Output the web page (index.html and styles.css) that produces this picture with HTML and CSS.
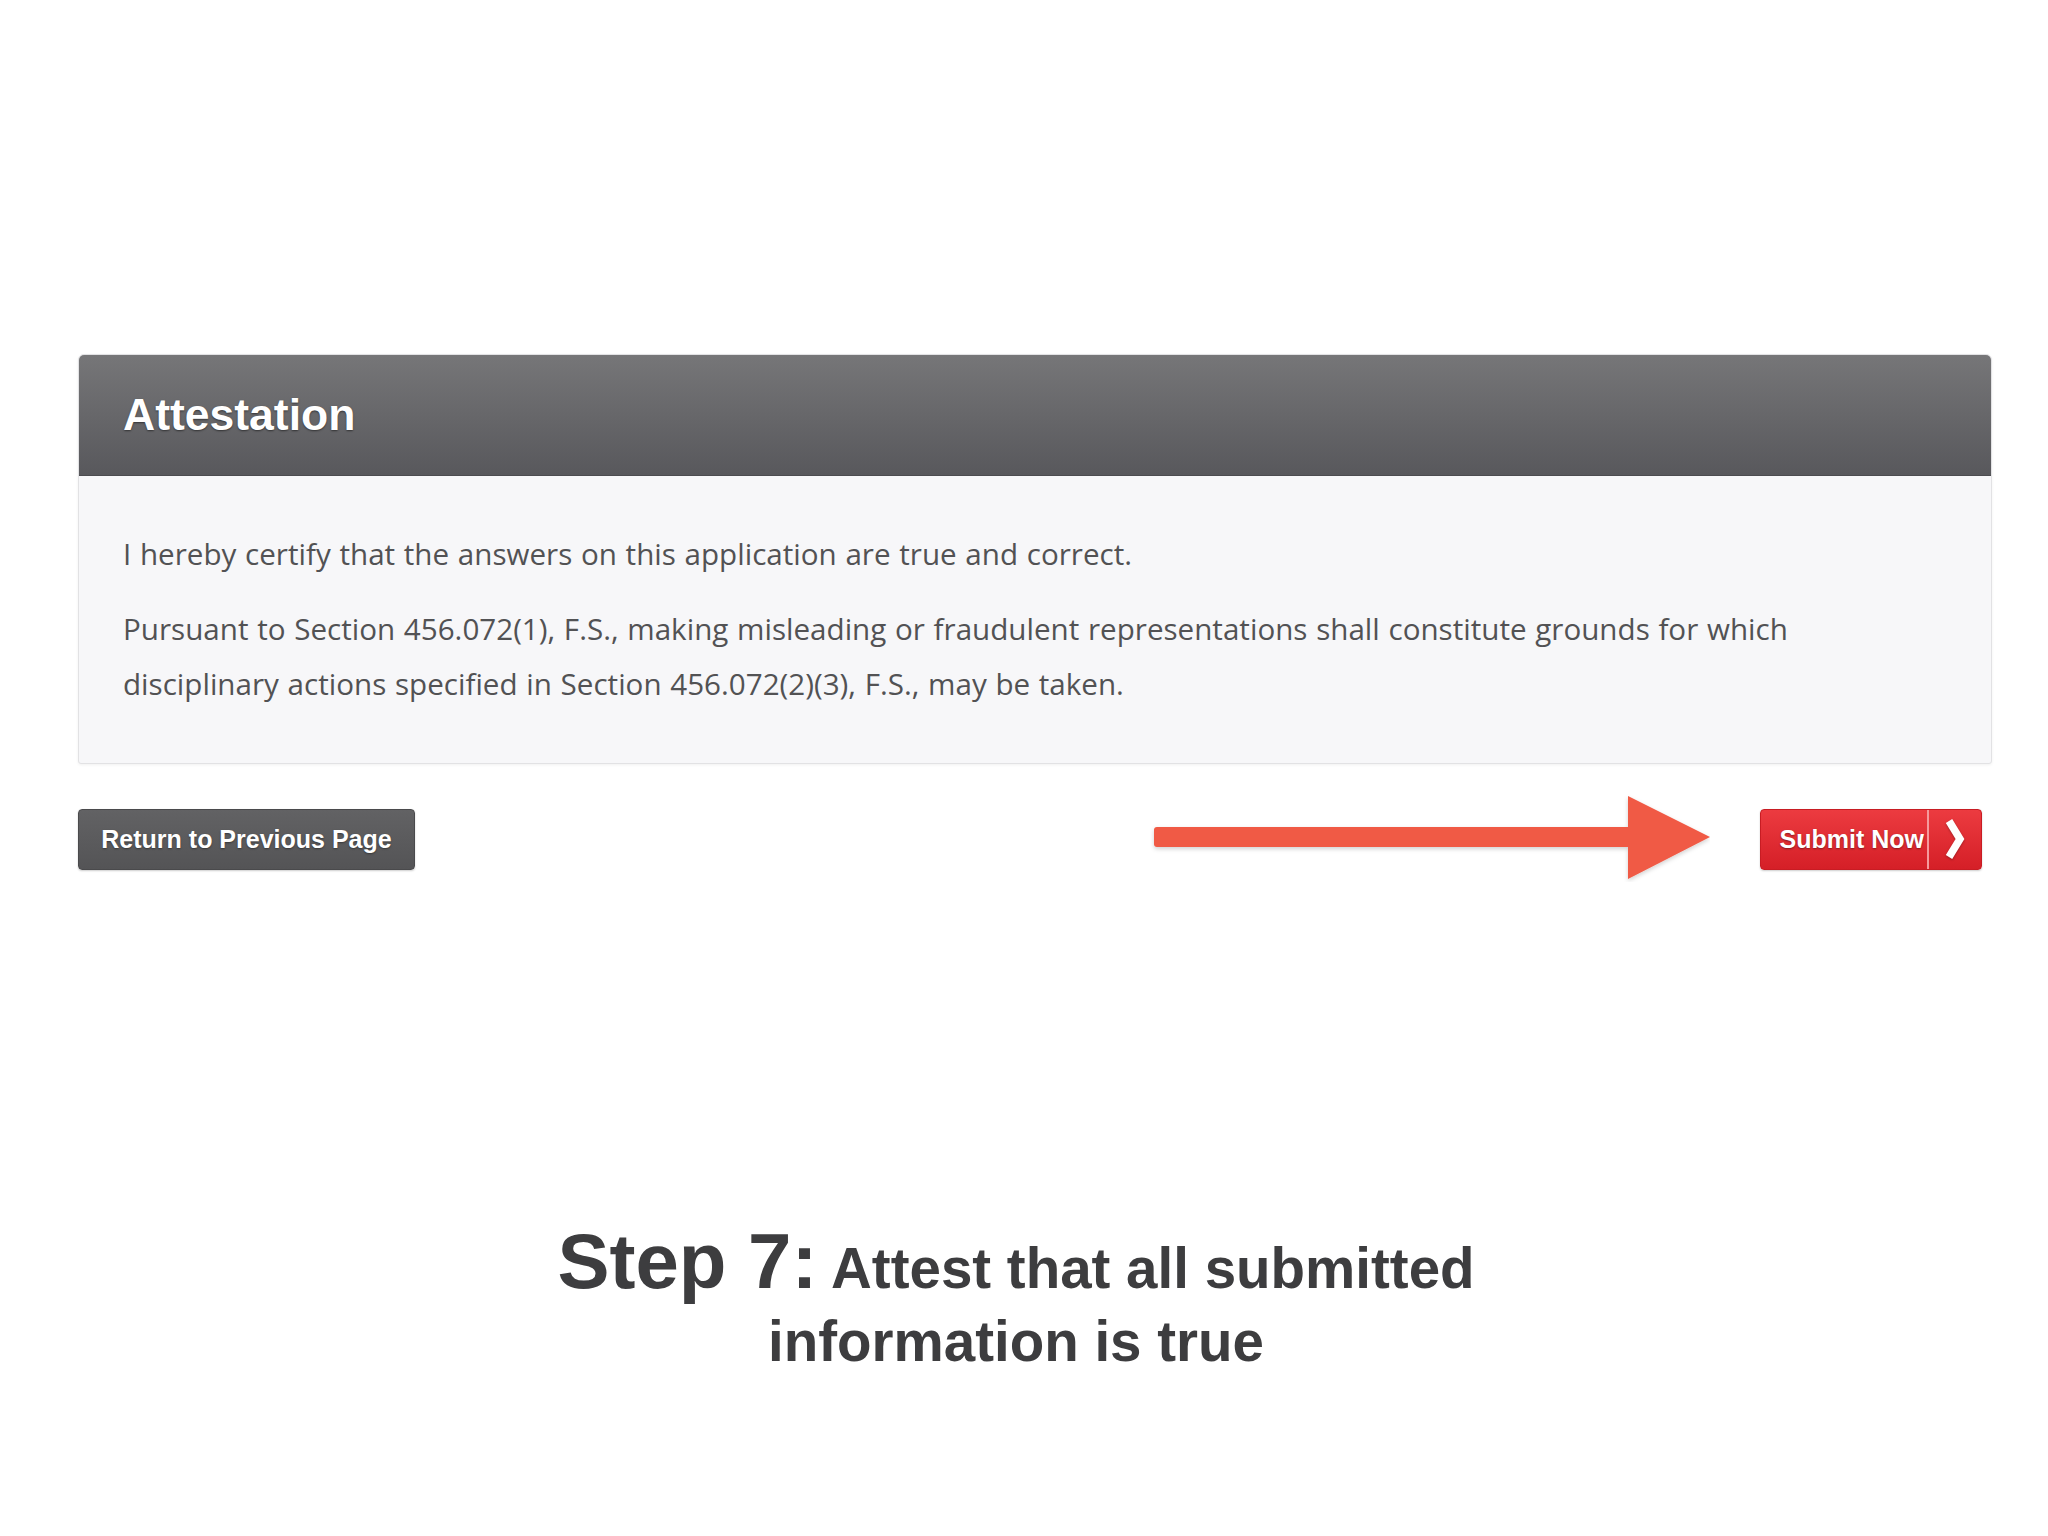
FILE: index.html
```html
<!DOCTYPE html>
<html lang="en">
<head>
<meta charset="utf-8">
<title>Step 7: Attestation</title>
<link rel="stylesheet" href="styles.css">
</head>
<body>
<main class="page">
  <section class="panel">
    <header class="panel-head">
      <h1 class="panel-title">Attestation</h1>
    </header>
    <div class="panel-body">
      <p class="para">I hereby certify that the answers on this application are true and correct.</p>
      <p class="para">Pursuant to Section 456.072(1), F.S., making misleading or fraudulent representations shall constitute grounds for which disciplinary actions specified in Section 456.072(2)(3), F.S., may be taken.</p>
    </div>
  </section>

  <div class="actions">
    <button class="btn btn-back" type="button">Return to Previous Page</button>
    <div class="submit-group">
      <svg class="arrow" width="560" height="90" viewBox="0 0 560 90" aria-hidden="true">
        <defs>
          <filter id="ash" x="-5%" y="-20%" width="110%" height="140%">
            <feDropShadow dx="0" dy="2" stdDeviation="2" flood-color="#000" flood-opacity="0.18"/>
          </filter>
        </defs>
        <g filter="url(#ash)" fill="#f05a45">
          <rect x="4" y="35" width="480" height="20" rx="3"/>
          <polygon points="478,4 560,45 478,87"/>
        </g>
      </svg>
      <button class="btn btn-submit" type="button">
        <span class="submit-label">Submit Now</span>
        <span class="submit-chev">
          <svg width="24" height="42" viewBox="0 0 24 42" aria-hidden="true">
            <path d="M6 3 L17 21 L6 39" fill="none" stroke="#fff" stroke-width="7.5" stroke-linecap="butt" stroke-linejoin="miter"/>
          </svg>
        </span>
      </button>
    </div>
  </div>

  <h2 class="caption"><span class="caption-step">Step 7:</span> Attest that all submitted<br>information is true</h2>
</main>
</body>
</html>
```

FILE: styles.css
```css
html, body {
  margin: 0;
  padding: 0;
  background: #ffffff;
}

.page {
  width: 2048px;
  padding: 354px 58px 0 78px;
  box-sizing: border-box;
  font-family: "Liberation Sans", Arial, sans-serif;
}

.panel {
  width: 1912px;
  border: 1px solid #e2e2e4;
  border-radius: 6px 6px 3px 3px;
  background: #f7f7f9;
  box-shadow: 0 1px 3px rgba(0,0,0,0.06);
  overflow: hidden;
}

.panel-head {
  height: 121px;
  display: flex;
  align-items: center;
  padding-left: 44px;
  background: linear-gradient(#767678, #58585c);
  border-bottom: 1px solid #4c4c50;
  box-sizing: border-box;
}

.panel-title {
  margin: 0;
  font-family: "Liberation Sans", Arial, sans-serif;
  font-weight: bold;
  font-size: 44.5px;
  color: #ffffff;
  text-shadow: 0 1px 2px rgba(0,0,0,0.5);
}

.panel-body {
  padding: 50px 44px 52px 44px;
}

.para {
  margin: 0;
  max-width: 1690px;
  font-family: "Open Sans", "Liberation Sans", sans-serif;
  font-size: 29.6px;
  line-height: 55px;
  word-spacing: 1px;
  color: #525254;
}

.para + .para {
  margin-top: 20px;
}

.actions {
  width: 1904px;
  margin-top: 32px;
  display: flex;
  justify-content: space-between;
  align-items: center;
}

.btn {
  border: none;
  margin: 0;
  padding: 0;
  font-family: "Liberation Sans", Arial, sans-serif;
  font-weight: bold;
  font-size: 25px;
  color: #ffffff;
  text-shadow: 0 1px 2px rgba(0,0,0,0.4);
  height: 61px;
  border-radius: 4px;
  cursor: pointer;
}

.btn-back {
  width: 337px;
  background: linear-gradient(#626264, #545456);
  border: 1px solid #4a4a4c;
  box-shadow: 0 1px 2px rgba(0,0,0,0.2);
}

.submit-group {
  display: flex;
  align-items: center;
  gap: 50px;
}

.arrow {
  display: block;
  margin-top: -4px;
}

.btn-submit {
  width: 222px;
  display: flex;
  align-items: stretch;
  background: linear-gradient(#ec3b40, #d51f27);
  border: 1px solid #c81c23;
  box-shadow: 0 1px 2px rgba(0,0,0,0.2);
  overflow: hidden;
}

.submit-label {
  width: 168px;
  display: flex;
  align-items: center;
  justify-content: flex-end;
  padding-right: 3px;
  box-sizing: border-box;
  border-right: 2px solid #f59a9c;
}

.submit-chev {
  flex: 1;
  display: flex;
  align-items: center;
  justify-content: center;
}

.submit-chev svg {
  display: block;
  filter: drop-shadow(0 1px 1px rgba(0,0,0,0.3));
}

.caption {
  margin: 343px 0 0 -78px;
  width: 2032px;
  text-align: center;
  font-family: "Liberation Sans", Arial, sans-serif;
  font-weight: bold;
  font-size: 56.5px;
  line-height: 73px;
  color: #3d3d3f;
}

.caption-step {
  font-size: 78px;
}
```
